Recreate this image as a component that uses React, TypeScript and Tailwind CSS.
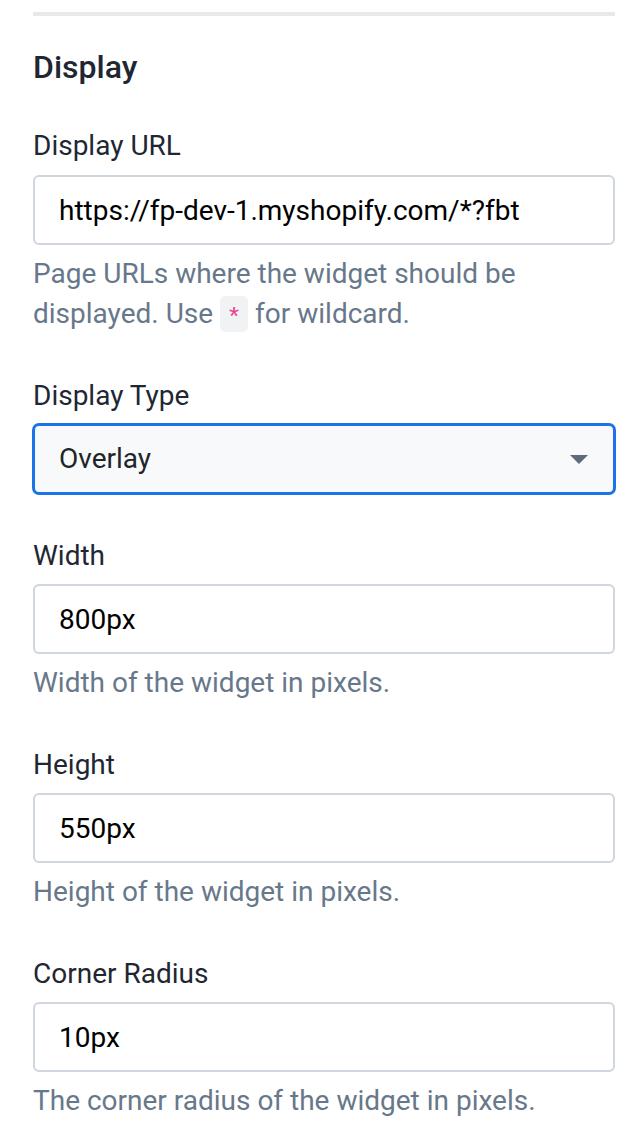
import React from 'react'

const labelClass = 'text-[28px] leading-[36px] text-[#1f2733]'
const helpClass = 'mt-[9px] text-[28px] leading-[40px] text-[#67788a]'
const inputClass =
  'mt-[10px] h-[70px] w-full rounded-[6px] border-2 border-[#cfd6de] bg-white px-[24px] text-[28px] text-black outline-none'

type FieldProps = {
  label: string
  value: string
  help?: React.ReactNode
}

const Field: React.FC<FieldProps> = ({ label, value, help }) => (
  <div className="mt-[44px] flex flex-col">
    <label className={labelClass}>{label}</label>
    <input className={inputClass} defaultValue={value} readOnly />
    {help && <p className={helpClass}>{help}</p>}
  </div>
)

export default function App() {
  return (
    <div
      className="min-h-[1138px] bg-white pl-[33px] pr-[27px]"
      style={{ fontFamily: 'Roboto, "Liberation Sans", sans-serif' }}
    >
      {/* Divider */}
      <div className="pt-[12px]">
        <div className="h-[4px] w-full bg-[#e9e9e9]"></div>
      </div>

      <h2 className="mt-[31px] text-[32px] font-medium leading-[40px] text-[#1f2733]">Display</h2>

      {/* Display URL */}
      <div className="mt-[41px] flex flex-col">
        <label className={labelClass}>Display URL</label>
        <input
          className="mt-[11px] h-[70px] w-full rounded-[6px] border-2 border-[#cfd6de] bg-white px-[24px] text-[28px] text-black outline-none"
          defaultValue="https://fp-dev-1.myshopify.com/*?fbt"
          readOnly
        />
        <div className={helpClass}>
          <p>Page URLs where the widget should be</p>
          <p className="flex items-center">
            <span>displayed. Use</span>
            <code className="mx-[7px] flex h-[36px] w-[28px] items-center justify-center rounded-[5px] bg-[#f1f2f4] pt-[9px] text-[26px] leading-none text-[#e83e8c]">
              *
            </code>
            <span>for wildcard.</span>
          </p>
        </div>
      </div>

      {/* Display Type */}
      <div className="mt-[44px] flex flex-col">
        <label className={labelClass}>Display Type</label>
        <div className="mt-[10px] flex h-[70px] w-full items-center justify-between rounded-[6px] border-[2px] border-[#1a73e8] bg-[#f8f9fa] pl-[24px] pr-[24px] ring-1 ring-[#1a73e8]">
          <span className="text-[28px] text-[#212529]">Overlay</span>
          <svg width="18" height="9" viewBox="0 0 18 9" className="mr-[1px]">
            <path d="M0 0 L18 0 L9 9 Z" fill="#5f6b7a" />
          </svg>
        </div>
      </div>

      <Field label="Width" value="800px" help="Width of the widget in pixels." />
      <Field label="Height" value="550px" help="Height of the widget in pixels." />
      <Field
        label="Corner Radius"
        value="10px"
        help="The corner radius of the widget in pixels."
      />
    </div>
  )
}
